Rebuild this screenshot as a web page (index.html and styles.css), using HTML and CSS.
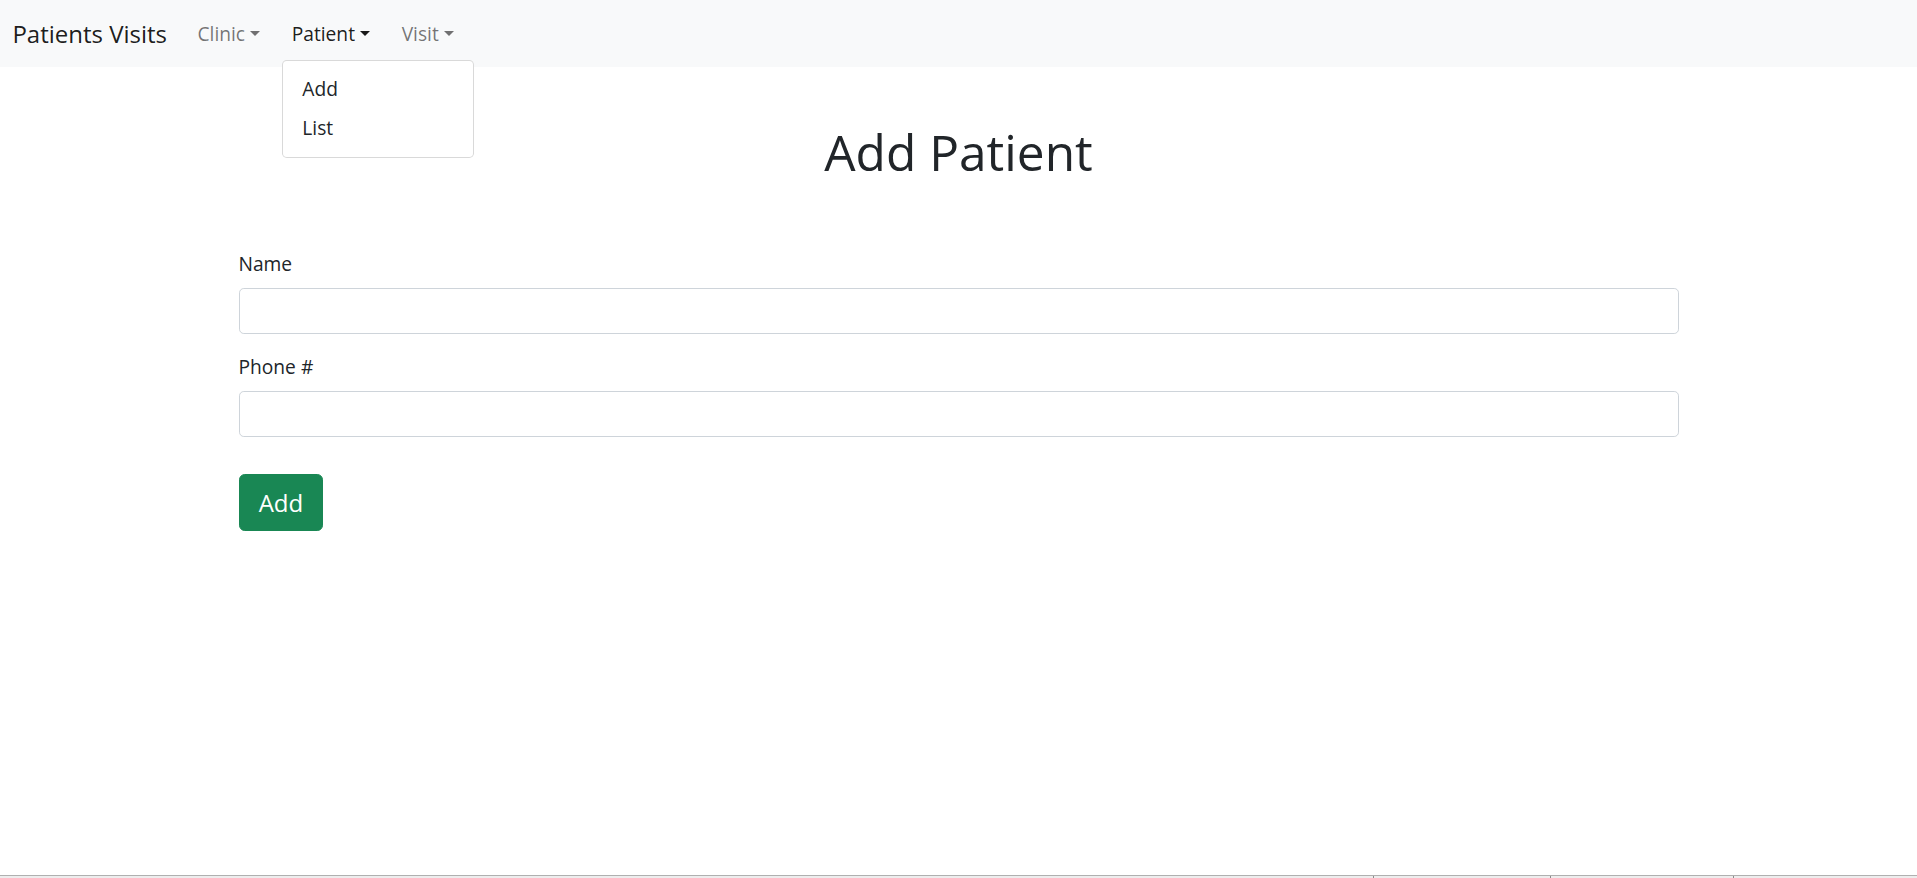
FILE: index.html
```html
<!DOCTYPE html>
<html lang="en">
<head>
<meta charset="utf-8">
<title>Patients Visits</title>
<link rel="stylesheet" href="styles.css">
</head>
<body>
<nav class="navbar">
  <div class="nav-inner">
    <a class="brand" href="#">Patients Visits</a>
    <ul class="nav-list">
      <li class="nav-item"><a class="nav-link caret" href="#">Clinic</a></li>
      <li class="nav-item">
        <a class="nav-link caret active" href="#">Patient</a>
        <ul class="dropdown-menu">
          <li><a class="dropdown-item" href="#">Add</a></li>
          <li><a class="dropdown-item" href="#">List</a></li>
        </ul>
      </li>
      <li class="nav-item"><a class="nav-link caret" href="#">Visit</a></li>
    </ul>
  </div>
</nav>
<main class="container">
  <h1 class="title">Add Patient</h1>
  <form class="form">
    <div class="field">
      <label class="form-label" for="name">Name</label>
      <input class="form-control" id="name" type="text">
    </div>
    <div class="field">
      <label class="form-label" for="phone">Phone #</label>
      <input class="form-control" id="phone" type="text">
    </div>
    <button class="btn-success" type="button">Add</button>
  </form>
</main>
<div class="status-bar">
  <span class="seg"></span>
  <span class="seg"></span>
  <span class="seg"></span>
  <span class="seg"></span>
</div>
</body>
</html>
```
FILE: styles.css
```css
* { box-sizing: border-box; }
html, body { margin: 0; padding: 0; }
body {
  font-family: "Open Sans", "Noto Sans", sans-serif;
  font-size: 19.2px;
  line-height: 1.5;
  color: #212529;
  background: #fff;
}
a { text-decoration: none; }
ul { list-style: none; margin: 0; padding: 0; }

.navbar {
  background: #f8f9fa;
  padding: 9.6px 0;
}
.nav-inner {
  display: flex;
  align-items: center;
  padding: 0 12.4px;
}
.brand {
  font-size: 24px;
  line-height: 36px;
  padding: 6px 0;
  margin-right: 20.8px;
  color: rgba(0,0,0,.9);
}
.nav-list { display: flex; gap: 12.6px; }
.nav-item { position: relative; }
.nav-link {
  display: block;
  padding: 10px 9.6px 9.2px;
  line-height: 28.8px;
  color: rgba(0,0,0,.55);
}
.nav-link.active { color: rgba(0,0,0,.9); }
.caret::after {
  content: "";
  display: inline-block;
  margin-left: .255em;
  vertical-align: .255em;
  border-top: .3em solid;
  border-right: .3em solid transparent;
  border-left: .3em solid transparent;
  border-bottom: 0;
}
.dropdown-menu {
  position: absolute;
  top: 100%;
  left: 0;
  margin-top: 2.4px;
  min-width: 192px;
  padding: 9.6px 0;
  background: #fff;
  border: 1px solid rgba(0,0,0,.15);
  border-radius: 4.8px;
  z-index: 10;
}
.dropdown-item {
  display: block;
  padding: 4.8px 19.2px;
  line-height: 28.8px;
  color: #212529;
  white-space: nowrap;
}

.container {
  max-width: 1440px;
  margin: 56px auto 0;
}
.title {
  margin: 0 0 66.9px;
  font-size: 49.6px;
  font-weight: 500;
  line-height: 1.2;
  text-align: center;
}
.field { margin-bottom: 19.2px; }
.form-label {
  display: inline-block;
  margin-bottom: 9.6px;
}
.form-control {
  display: block;
  width: 100%;
  height: 45.6px;
  padding: 7.2px 14.4px;
  font: inherit;
  color: #212529;
  background: #fff;
  border: 1px solid #ced4da;
  border-radius: 4.8px;
}
.btn-success {
  margin-top: 18px;
  font-family: inherit;
  font-size: 24px;
  line-height: 36px;
  padding: 9.6px 19.2px;
  color: #fff;
  background: #198754;
  border: 1px solid #198754;
  border-radius: 5.76px;
}

.status-bar {
  position: fixed;
  left: 0;
  right: 0;
  bottom: 0;
  height: 3px;
  display: grid;
  grid-template-columns: 1373px 177px 183px 1fr;
  background: #ededed;
  border-top: 1px solid #b0b0b0;
}
.seg + .seg { border-left: 1px solid #8a8a8a; }
```
